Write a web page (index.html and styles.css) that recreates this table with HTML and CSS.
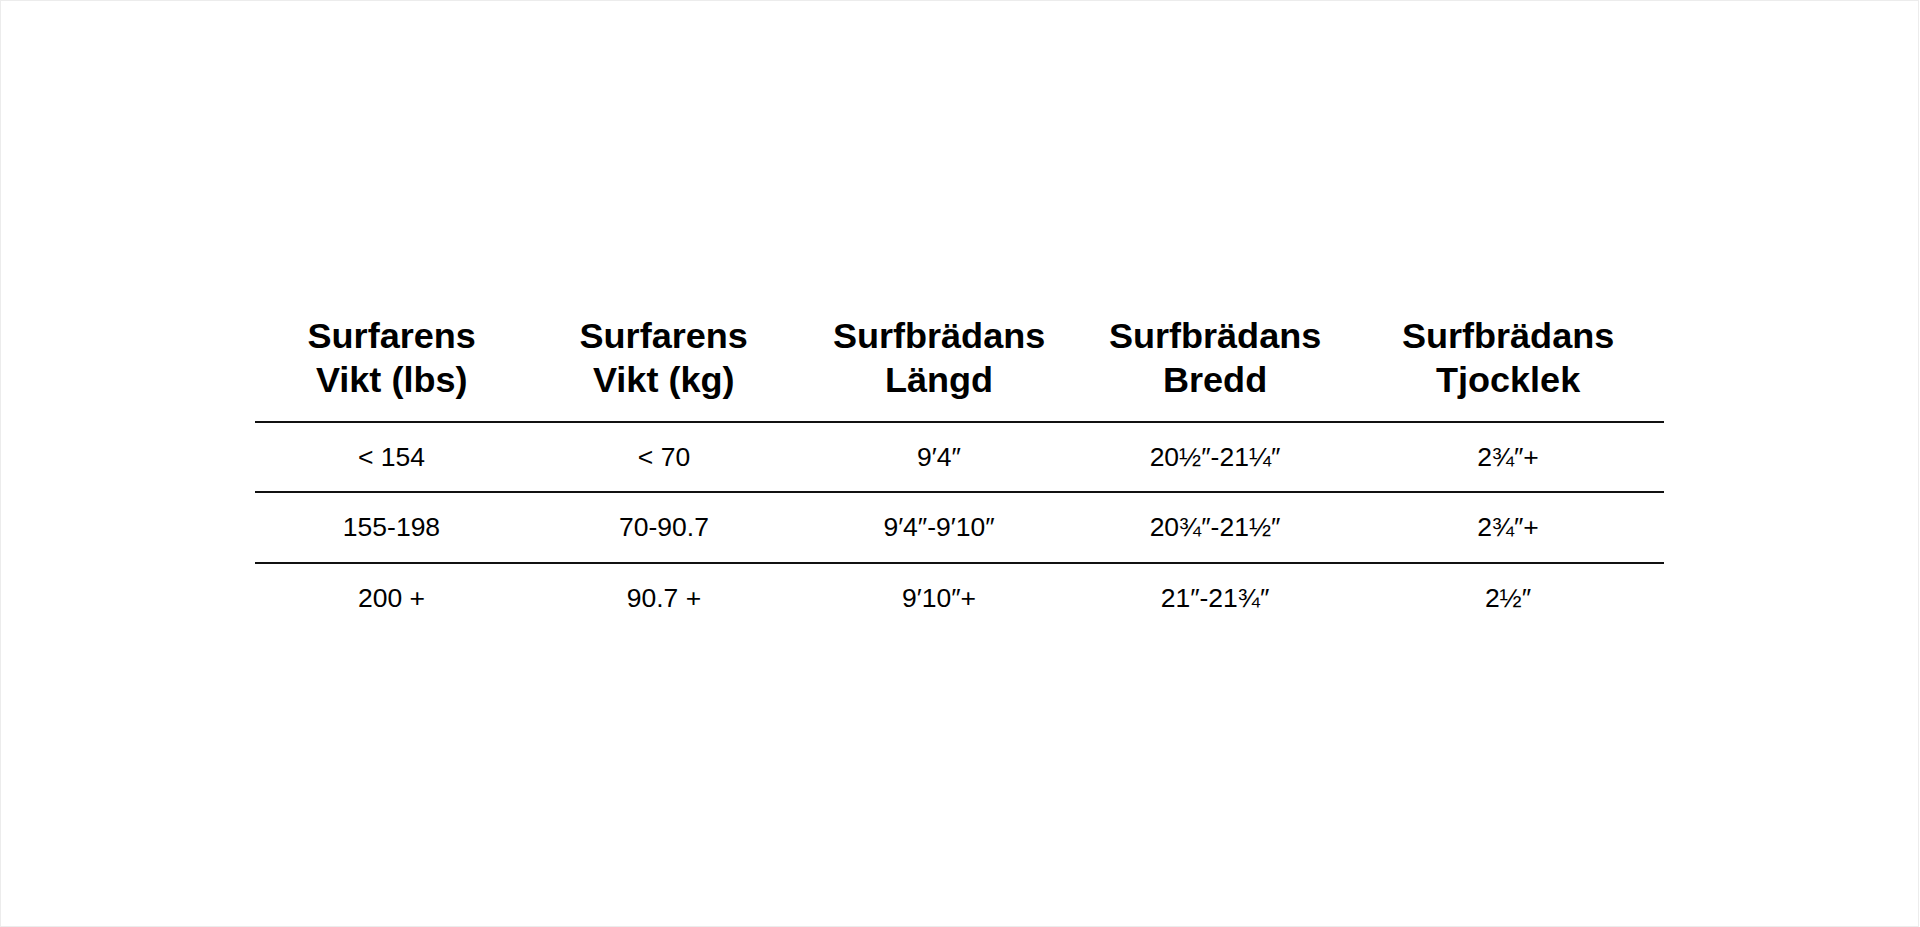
FILE: index.html
```html
<!DOCTYPE html>
<html lang="sv">
<head>
<meta charset="utf-8">
<title>Surfbräda storlekstabell</title>
<link rel="stylesheet" href="styles.css">
</head>
<body>
<div class="frame">
  <table class="size-table">
    <colgroup>
      <col class="c1"><col class="c2"><col class="c3"><col class="c4"><col class="c5">
    </colgroup>
    <thead>
      <tr>
        <th><span class="hd">Surfarens<br>Vikt (lbs)</span></th>
        <th><span class="hd">Surfarens<br>Vikt (kg)</span></th>
        <th><span class="hd">Surfbrädans<br>Längd</span></th>
        <th><span class="hd">Surfbrädans<br>Bredd</span></th>
        <th><span class="hd">Surfbrädans<br>Tjocklek</span></th>
      </tr>
    </thead>
    <tbody>
      <tr>
        <td>&lt; 154</td>
        <td>&lt; 70</td>
        <td>9′4″</td>
        <td>20½″-21¼″</td>
        <td>2¾″+</td>
      </tr>
      <tr>
        <td>155-198</td>
        <td>70-90.7</td>
        <td>9′4″-9′10″</td>
        <td>20¾″-21½″</td>
        <td>2¾″+</td>
      </tr>
      <tr class="last">
        <td>200 +</td>
        <td>90.7 +</td>
        <td>9′10″+</td>
        <td>21″-21¾″</td>
        <td>2½″</td>
      </tr>
    </tbody>
  </table>
</div>
</body>
</html>
```

FILE: styles.css
```css
html, body {
  margin: 0;
  padding: 0;
  background: #ffffff;
}

body {
  font-family: "Liberation Sans", Arial, sans-serif;
  color: #000000;
}

.frame {
  box-sizing: border-box;
  width: 1919px;
  height: 927px;
  border: 1px solid #ececec;
  padding-top: 300px;
  background: #ffffff;
}

.size-table {
  margin: 0 auto;
  width: 1409px;
  table-layout: fixed;
  border-collapse: separate;
  border-spacing: 0;
}

.c1 { width: 273px; }
.c2 { width: 272px; }
.c3 { width: 278px; }
.c4 { width: 274px; }
.c5 { width: 312px; }

.size-table th {
  padding: 12.9px 0 19.1px;
  font-size: 35px;
  line-height: 44px;
  font-weight: 700;
  text-align: center;
  border-bottom: 2px solid #111111;
}

.hd {
  display: inline-block;
  transform: scaleX(1.03);
}

.size-table td {
  padding: 0;
  height: 68.5px;
  font-size: 26.5px;
  line-height: 68.5px;
  text-align: center;
  border-bottom: 2px solid #111111;
}

.size-table tr.last td {
  border-bottom: none;
}
```
